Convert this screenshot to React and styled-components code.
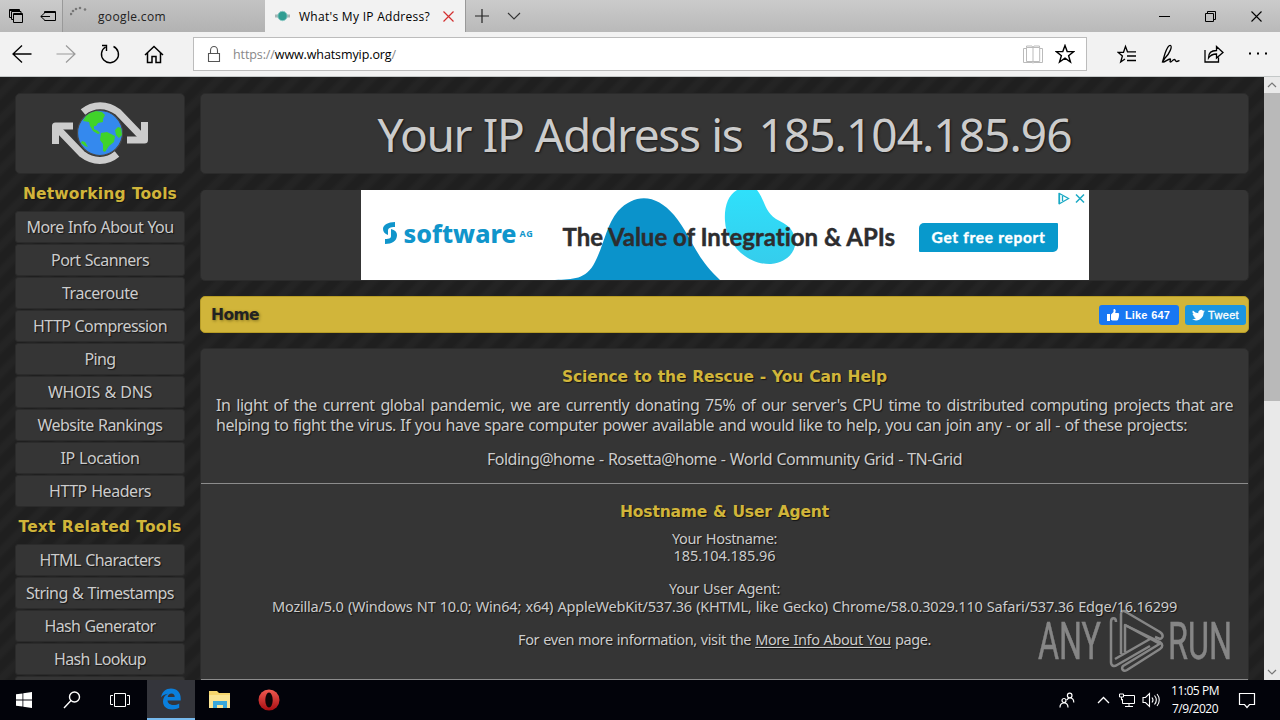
import React, { useLayoutEffect, useRef, useState } from "react";
import styled, { createGlobalStyle, css } from "styled-components";

const GlobalStyle = createGlobalStyle`
    * {
        box-sizing: border-box;
    }

    body {
        margin: 0;
        overflow: hidden;
        background: #000;
        font-family: "Open Sans", "Noto Sans", sans-serif;
    }

    svg {
        flex: none;
    }
`;

const siteFont = `"Noto Sans", "DejaVu Sans", sans-serif`;
const boldFont = `"DejaVu Sans", sans-serif`;

const Screen = styled.div`
    display: flex;
    flex-direction: column;
    width: 1280px;
    height: 720px;
    overflow: hidden;
`;

/* ---------- text that keeps a fixed run length ---------- */

const Run = styled.span`
    display: inline-block;
    white-space: pre;
    flex: none;
`;

function Fit({ width, children, className }) {
    const ref = useRef(null);
    const [spacing, setSpacing] = useState(0);

    useLayoutEffect(() => {
        ref.current.style.letterSpacing = "0px";
        const natural = ref.current.getBoundingClientRect().width;
        setSpacing((width - natural) / ref.current.textContent.length);
    }, [width]);

    return (
        <Run ref={ref} className={className} style={{ letterSpacing: spacing + "px" }}>{children}</Run>
    );
}

/* ---------- browser chrome ---------- */

const TabBar = styled.div`
    display: flex;
    height: 32px;
    flex: none;
    background: linear-gradient(#cbcbcb, #b9b9b9);
`;

const TabTools = styled.div`
    display: flex;
    align-items: center;
    width: 62px;
    padding-left: 8px;
    gap: 16px;
`;

const Tab = styled.div`
    display: flex;
    align-items: center;
    width: ${({ $active }) => ($active ? 200 : 203)}px;
    padding-left: ${({ $active }) => ($active ? 8 : 7)}px;
    font-size: 12px;
    color: ${({ $active }) => ($active ? "#000" : "#222")};
    background: ${({ $active }) => ($active ? "#f2f2f2" : "linear-gradient(#c3c3c3, #b2b2b2)")};
    border-left: 1px solid ${({ $active }) => ($active ? "#f2f2f2" : "#999")};

    & > svg:first-child {
        margin-right: 8px;
    }

    & > svg:last-child {
        margin-left: 13px;
    }
`;

const NewTab = styled.div`
    display: flex;
    align-items: center;
    gap: 18px;
    flex: 1;
    padding-left: 9px;
    border-left: 1px solid #999;
`;

const WindowButtons = styled.div`
    display: flex;
    align-items: center;
    gap: 35px;
    padding-right: 18px;
`;

const Toolbar = styled.div`
    display: flex;
    align-items: center;
    height: 45px;
    flex: none;
    padding-left: 12px;
    background: #f2f2f2;
    border-bottom: 1px solid #c4c8c8;
`;

const NavButtons = styled.div`
    display: flex;
    gap: 24px;
    width: 181px;
`;

const AddressBar = styled.div`
    display: flex;
    align-items: center;
    width: 894px;
    height: 34px;
    padding: 0 11px 0 12px;
    background: #fff;
    border: 1px solid #bcbcbc;
    font-size: 12.5px;
    color: #888;

    b {
        font-weight: 400;
        color: #000;
    }

    & > svg:first-child {
        margin-right: 11px;
    }
`;

const AddressTools = styled.div`
    display: flex;
    gap: 12px;
    margin-left: auto;
`;

const ToolButtons = styled.div`
    display: flex;
    gap: 23.7px;
    padding-left: 30px;
`;

/* ---------- web page ---------- */

const Viewport = styled.div`
    display: flex;
    height: 603px;
    flex: none;
    position: relative;
    overflow: hidden;
`;

const Page = styled.div`
    display: flex;
    gap: 15px;
    width: 1264px;
    padding: 16px 15px 0;
    background: repeating-linear-gradient(135deg, #1f1f1f 0 6px, #242424 10px 14px, #1f1f1f 18px);
    font-family: ${siteFont};
    font-size: 16px;
    word-spacing: 0.7px;
    color: #ccc;
    text-shadow: 1px 1px 1px #151515;
`;

const panel = css`
    flex: none;
    background: #353535;
    border: 1px solid #2b2b2b;
    border-radius: 5px;
`;

const Sidebar = styled.div`
    width: 170px;
    flex: none;
`;

const LogoBox = styled.div`
    ${panel}
    display: flex;
    justify-content: center;
    height: 81px;
    margin-bottom: 1px;
`;

const Logo = styled.svg`
    margin-top: 6px;
`;

const GroupTitle = styled.div`
    height: 36px;
    display: flex;
    align-items: center;
    justify-content: center;
    padding-top: 2px;
    font-family: ${boldFont};
    font-size: 15.5px;
    font-weight: bold;
    color: #d1b53a;
`;

const ToolLink = styled.div`
    ${panel}
    border-radius: 3px;
    display: flex;
    align-items: center;
    justify-content: center;
    height: 32px;
    margin-bottom: 1px;
`;

const Main = styled.div`
    display: flex;
    flex-direction: column;
    flex: none;
    width: 1049px;
`;

const TitlePanel = styled.div`
    ${panel}
    display: flex;
    align-items: center;
    justify-content: center;
    gap: 16px;
    height: 81px;
    margin-bottom: 16px;
    font-size: 46px;
    line-height: 60px;
    text-shadow: 1px 1px 2px #151515;
`;

const AdPanel = styled.div`
    ${panel}
    display: flex;
    justify-content: center;
    height: 91px;
    margin-bottom: 15px;
    border-width: 0 1px 1px;
`;

const Banner = styled.div`
    position: relative;
    display: flex;
    align-items: center;
    width: 728px;
    height: 90px;
    padding-left: 21px;
    background: #fff;
    font-family: Lato, sans-serif;
    font-weight: 700;
    word-spacing: 0;
    text-shadow: none;
`;

const BannerArt = styled.svg`
    position: absolute;
    left: 0;
    top: 0;
`;

const BrandMark = styled.svg`
    margin-top: -5px;
`;

const BrandName = styled(Fit)`
    margin: -4px 3px 0 6px;
    font-family: "Noto Sans", "Open Sans", sans-serif;
    font-size: 25px;
    font-weight: 800;
    color: #1095cb;
`;

const BrandSuffix = styled(Fit)`
    margin: -4px 29px 0 0;
    font-family: "Open Sans", sans-serif;
    font-size: 9px;
    font-weight: 700;
    color: #1095cb;
`;

const Headline = styled(Fit)`
    position: relative;
    margin: 3px 24px 0 0;
    font-size: 24px;
    -webkit-text-stroke: 0.4px #2d2d2f;
    color: #2d2d2f;
`;

const ReportButton = styled.div`
    display: flex;
    align-items: center;
    justify-content: center;
    width: 139px;
    height: 29px;
    margin-top: 5px;
    padding-bottom: 2px;
    border-radius: 5px 1px 5px 1px;
    background: #0899cc;
    color: #fff;
    font-size: 15.5px;
    -webkit-text-stroke: 0.4px #fff;
`;

const HomeBar = styled.div`
    display: flex;
    flex: none;
    align-items: center;
    height: 37px;
    margin-bottom: 15px;
    padding: 1px 2px 0 10px;
    gap: 6px;
    background: #d1b53a;
    border: 1px solid #b79c26;
    border-radius: 5px;
    font-family: ${boldFont};
    font-size: 15.5px;
    font-weight: bold;
    color: #222;
    text-shadow: 1px 1px 3px #80701f;

    & > span {
        margin-right: auto;
    }
`;

const ShareButton = styled.div`
    display: flex;
    align-items: center;
    gap: ${({ $gap }) => $gap}px;
    width: ${({ $width }) => $width}px;
    height: 20px;
    margin-top: -1px;
    padding-left: 7px;
    border-radius: 3px;
    background: ${({ $color }) => $color};
    color: #fff;
    font-family: "Liberation Sans", Arial, sans-serif;
    font-size: 11px;
    font-weight: 700;
    text-shadow: none;
    -webkit-text-stroke: ${({ $soft }) => ($soft ? "0.3px #fff" : "0")};

    & > span {
        font-weight: ${({ $soft }) => ($soft ? 400 : 700)};
    }
`;

const Article = styled.div`
    ${panel}
    height: 360px;
    border-radius: 5px 5px 0 0;
`;

const Section = styled.div`
    padding: 18px 15px 0;
    height: ${({ $height }) => $height}px;
    border-bottom: 1px solid #8c8c8c;
    font-size: ${({ $size }) => $size}px;
    line-height: ${({ $line }) => $line}px;
    text-align: center;
`;

const SectionTitle = styled.div`
    height: 20px;
    margin-bottom: 8px;
    font-family: ${boldFont};
    font-size: 15.5px;
    line-height: 20px;
    font-weight: bold;
    color: #d1b53a;
`;

const Line = styled.div`
    height: ${({ $height }) => $height}px;
    white-space: nowrap;
    text-align: ${({ $align }) => $align || "center"};

    & > span {
        vertical-align: top;
    }

    u {
        text-underline-offset: 2px;
        text-decoration-thickness: 1px;
    }
`;

const Justified = styled(Line)`
    white-space: normal;
    text-align-last: justify;
    letter-spacing: -0.45px;
`;

const ScrollBar = styled.div`
    display: flex;
    flex-direction: column;
    align-items: center;
    width: 16px;
    background: #e9e9e9;
`;

const ScrollThumb = styled.div`
    width: 16px;
    height: 308px;
    margin-bottom: auto;
    background: #b9b9b9;
`;

const Watermark = styled.div`
    position: absolute;
    left: 1036px;
    top: 531px;
    opacity: 0.6;
    word-spacing: 0;
    text-shadow: none;
`;

/* ---------- taskbar ---------- */

const Taskbar = styled.div`
    display: flex;
    align-items: center;
    height: 40px;
    flex: none;
    background: #02030a;
    color: #fff;
`;

const TaskGroup = styled.div`
    display: flex;
    width: 147px;
`;

const TaskItem = styled.div`
    display: flex;
    align-items: center;
    justify-content: center;
    width: ${({ $width }) => $width || 48}px;
    height: 40px;
    padding-left: ${({ $nudge }) => $nudge || 0}px;
    background: ${({ $active }) => ($active ? "#34353b" : "transparent")};
    border-bottom: ${({ $active }) => ($active ? "2px solid #76b9ed" : "none")};
`;

const Tray = styled.div`
    display: flex;
    align-items: center;
    margin-left: auto;
    padding-right: 24px;
`;

const Clock = styled.div`
    display: flex;
    flex-direction: column;
    align-items: center;
    width: 58px;
    margin: 0 14px 0 2px;
    font-size: 12px;
    line-height: 18px;
`;

/* thin outlined glyph used all over the chrome */
function Glyph({ w, h, d, color = "#000", stroke = 1, fill = "none" }) {
    return (
        <svg width={w} height={h} viewBox={`0 0 ${w} ${h}`} fill={fill} stroke={color} strokeWidth={stroke}>
            <path d={d} />
        </svg>
    );
}

const networkingTools = [
    ["More Info About You", 147],
    ["Port Scanners", 98],
    ["Traceroute", 76],
    ["HTTP Compression", 134],
    ["Ping", 31],
    ["WHOIS & DNS", 104],
    ["Website Rankings", 125],
    ["IP Location", 79],
    ["HTTP Headers", 102],
];

const textTools = [
    ["HTML Characters", 121],
    ["String & Timestamps", 148],
    ["Hash Generator", 111],
    ["Hash Lookup", 92],
];

function ToolGroup({ title, width, items }) {
    return (
        <>
            <GroupTitle><Fit width={width}>{title}</Fit></GroupTitle>
            {items.map(([name, w]) => (
                <ToolLink key={name}><Fit width={w}>{name}</Fit></ToolLink>
            ))}
        </>
    );
}

function Chrome() {
    return (
        <>
            <TabBar>
                <TabTools>
                    <Glyph w={16} h={16} d="M3.500 9.500H1.500v-8h10v2M5.500 11.500H3.500v-8h9.500v2M1.500 2.500h10M5.500 5.500h9v9h-9zM5 6.500h10" />
                    <Glyph w={16} h={16} d="M4.500 5.500v-2h11v9h-11v-1M4.500 4.500h11M10 8.500H.8M4 5.500l-3.200 3 3.200 3" />
                </TabTools>
                <Tab>
                    <svg width="20" height="20" viewBox="0 0 20 20" fill="#777">
                        <circle cx="1" cy="8" r="1.300" />
                        <circle cx="3" cy="5" r="1.300" />
                        <circle cx="6" cy="3" r="1.300" />
                        <circle cx="10" cy="2" r="1.300" />
                        <circle cx="15" cy="3.500" r="1.300" />
                    </svg>
                    <Fit width={68}>google.com</Fit>
                </Tab>
                <Tab $active>
                    <svg width="17" height="16" viewBox="0 0 17 16">
                        <path d="M1 6.500h4v3H1zM12 6.500h4v3h-4z" fill="#a7b4b4" />
                        <circle cx="8.500" cy="8" r="4.700" fill="#2f9d92" stroke="#8ec9c5" />
                    </svg>
                    <Fit width={131}>What's My IP Address?</Fit>
                    <Glyph w={11} h={11} d="M.5.5l10 10M10.500.5l-10 10" color="#d32f2f" stroke={1.2} />
                </Tab>
                <NewTab>
                    <Glyph w={14} h={14} d="M7 0v14M0 7h14" color="#222" stroke={1.2} />
                    <Glyph w={14} h={8} d="M1 1l6 6 6-6" color="#333" stroke={1.100} />
                </NewTab>
                <WindowButtons>
                    <Glyph w={11} h={11} d="M0 5.500h11" />
                    <Glyph w={11} h={11} d="M.5 2.500h8v8h-8zM2.500 2.500v-2h8v8h-2" />
                    <Glyph w={11} h={11} d="M.5.5l10 10M10.500.5l-10 10" stroke={1.100} />
                </WindowButtons>
            </TabBar>
            <Toolbar>
                <NavButtons>
                    <Glyph w={20} h={20} d="M1 10h18.500M10 1.500L1 10l9 8.500" stroke={1.3} />
                    <Glyph w={20} h={20} d="M.5 10H19M10 1.500l9 8.500-9 8.500" color="#9a9a9a" stroke={1.2} />
                    <Glyph w={20} h={20} d="M13.500 2.500a8.500 8.500 0 1 1-8 .5M2 1.500h4.500V7" stroke={1.4} />
                    <Glyph w={20} h={20} d="M1 11l9-8.500 9 8.500M3.500 9v9.500h4.500v-6h4v6h4.500V9" stroke={1.5} />
                </NavButtons>
                <AddressBar>
                    <Glyph w={16} h={18} d="M2.500 8.500h11v8h-11zM4.500 8.500v-3a3.500 4 0 0 1 7 0v3" color="#555" stroke={1.1} />
                    <Fit width={163}>https://<b>www.whatsmyip.org</b>/</Fit>
                    <AddressTools>
                        <Glyph w={20} h={20} d="M10 3.500v14M10 3.500H3.500v14h13.200v-14zM3.500 3.500V2h5.500l1 1.500 1-1.500h5.500v1.500M3.500 4.500H.5v14h8.500l1 .5 1-.5h8.500v-14h-3" color="#bbb" />
                        <Glyph w={20} h={20} d="M10 1.500l2.200 6.100h6.600l-5.200 4.100 1.900 6.300L10 14.200 4.500 18l1.900-6.300L1.200 7.600h6.600z" stroke={1.4} />
                    </AddressTools>
                </AddressBar>
                <ToolButtons>
                    <Glyph w={20} h={20} d="M8 15L3.700 18l1.700-6L1 8.300h5.500l2-5.800 2 5.300h8.500M10 12h9M10 16.500h9" stroke={1.3} />
                    <Glyph w={20} h={20} d="M1.500 18L4 9.500C6 4 8 1 9.500 1.500c2 1-1 8-5 12L1.500 18c2 1 5-3 7.500-3 1.500 0-1 3 .5 3s2-2.500 4-2.500c1 0 .8 2 2 2s2-.5 3-1" stroke={1.3} />
                    <Glyph w={20} h={20} d="M1 6v12h13.500v-4.500M4.500 14c0-5 3-7.500 8-7.500v-4l6.500 6-6.500 5.500v-4c-4 0-6 1-8 4z" stroke={1.3} />
                    <Glyph w={20} h={20} d="M1 9.500h2M9 9.500h2M17 9.500h2" stroke={2} />
                </ToolButtons>
            </Toolbar>
        </>
    );
}

function GlobeLogo() {
    return (
        <Logo width="100" height="66" viewBox="0 0 100 66">
            <g fill="none" stroke="#ccc" strokeWidth="7" strokeLinejoin="round">
                <path d="M33 12C43 3.500 57 3.500 68 12L92 37" />
                <path d="M67 54C57 62.500 43 62.500 32 54L8 29" />
                <path d="M94.500 22v18H77M5.500 44V26H23" />
            </g>
            <circle cx="50" cy="33" r="22.500" fill="#3489ee" stroke="#4a4a4a" strokeWidth="1.200" />
            <g fill="#40d32a">
                <path d="M36 16l4-3 6-2 6 1 3 3-2 4 0 3-5 1-2 3-2 0 0 3 4 2 2 2-2 1-5-3-3-5-1-4-6-1z" />
                <path d="M51 33l6-1 8 4-1 6-5 4-4 6-2-1 0-7-3-4z" />
                <path d="M68 27l3 1 1 7-3 3-3-3-1-5zM32 41l3 1 3 5-3-1-4-3z" />
            </g>
        </Logo>
    );
}

function AdBanner() {
    return (
        <Banner>
            <BannerArt width="728" height="90" viewBox="0 0 728 90">
                <defs>
                    <linearGradient id="drop" x1="0" y1="0" x2="0" y2="1">
                        <stop offset="0" stopColor="#2fe0fb" />
                        <stop offset="1" stopColor="#35cdec" />
                    </linearGradient>
                </defs>
                <path d="M194 90c18-1 31 0 40-18 10-20 11-36 23-51 18-19 39-16 56 4 17 20 20 41 46 65z" fill="#0b93cb" />
                <path d="M376 0h20c8 10 7 21 19 29 12 6 17 10 19 20 2 11-6 23-24 25-25 1-45-21-46-43-1-14 3-26 12-31z" fill="url(#drop)" />
                <path d="M698 3v11M698.500 3.500l9 5-9 5.200zM701.500 6v5" fill="none" stroke="#19a9c4" strokeWidth="1.300" />
                <path d="M715 4.500l8 8M723 4.500l-8 8" stroke="#19a9c4" strokeWidth="1.500" />
            </BannerArt>
            <BrandMark width="16" height="24" viewBox="0 0 16 24">
                <path d="M13 1v5c-5 0-7 1-7 4v4c-3-1-5-3-5-6 0-4 5-7 12-7zM3 23v-5c5 0 6-1 6-3v-7c4 1 6 3 6 6 0 6-5 9-12 9z" fill="#1095cb" />
            </BrandMark>
            <BrandName width={113}>software</BrandName>
            <BrandSuffix width={14}>AG</BrandSuffix>
            <Headline width={333}>The Value of Integration &amp; APIs</Headline>
            <ReportButton><Fit width={114}>Get free report</Fit></ReportButton>
        </Banner>
    );
}

function AnyRun() {
    return (
        <Watermark>
            <svg width="200" height="66" viewBox="0 0 200 66" fill="#bdbdbd">
                <g fontFamily="Roboto, sans-serif" fontSize="51" fontWeight="400" stroke="#bdbdbd" strokeWidth="0.500">
                    <text x="2" y="51" textLength="63" lengthAdjust="spacingAndGlyphs">ANY</text>
                    <text x="132" y="51" textLength="64" lengthAdjust="spacingAndGlyphs">RUN</text>
                </g>
                <g fill="none" stroke="#bdbdbd" strokeWidth="2.500" strokeLinejoin="round">
                    <path d="M80 14c0-5-5-5-5 0v40c0 4 3 5 6 3l33-19" />
                    <path d="M79 51l35-20M85 46V6c0-3 3-4 5-2l34 20c4 3 3 6 0 7l-5-2M89 44V17l35 19" />
                    <path d="M89 17l35 17c3 2 3 5 0 7L91 62c-4 2-6-1-4-4l38-23" />
                </g>
            </svg>
        </Watermark>
    );
}

function WebPage() {
    return (
        <Viewport>
            <Page>
                <Sidebar>
                    <LogoBox><GlobeLogo /></LogoBox>
                    <ToolGroup title="Networking Tools" width={154} items={networkingTools} />
                    <ToolGroup title="Text Related Tools" width={163} items={textTools} />
                    <ToolLink />
                </Sidebar>
                <Main>
                    <TitlePanel>
                        <Fit width={365}>Your IP Address is</Fit>
                        <Fit width={313}>185.104.185.96</Fit>
                    </TitlePanel>
                    <AdPanel><AdBanner /></AdPanel>
                    <HomeBar>
                        <Fit width={48}>Home</Fit>
                        <ShareButton $color="#1877f2" $width={80} $gap={5}>
                            <svg width="14" height="14" viewBox="0 0 14 14" fill="#fff">
                                <path d="M1 6h3v7H1zM5 6.500L7.500 4V1.500c0-1 2.200-.8 2.200 1.200L9.200 5H12c1.300 0 1.500 1.300.8 2 .6.700.4 1.500-.2 2 .4.700.1 1.500-.5 1.800.2 1-.2 1.700-1.300 1.700H7c-1 0-1.500-.5-2-.5z" />
                            </svg>
                            <Fit width={45}>Like 647</Fit>
                        </ShareButton>
                        <ShareButton $color="#1b95e0" $width={61} $gap={3} $soft>
                            <svg width="13" height="12" viewBox="0 0 24 20" fill="#fff">
                                <path d="M7.500 20c9 0 14-7.500 14-14v-.6A10 10 0 0 0 24 2.900c-.9.400-1.800.7-2.800.8A5 5 0 0 0 23.300 1c-1 .6-2 1-3.100 1.200a4.900 4.900 0 0 0-8.400 4.500A14 14 0 0 1 1.700 1.600a4.900 4.900 0 0 0 1.500 6.500c-.8 0-1.500-.2-2.200-.6a4.900 4.900 0 0 0 4 4.900c-.7.200-1.500.2-2.300.1a4.900 4.900 0 0 0 4.600 3.400A9.900 9.900 0 0 1 0 17.900 14 14 0 0 0 7.500 20" />
                            </svg>
                            <Fit width={31}>Tweet</Fit>
                        </ShareButton>
                    </HomeBar>
                    <Article>
                        <Section $height={135} $size={16} $line={20}>
                            <SectionTitle><Fit width={325}>Science to the Rescue - You Can Help</Fit></SectionTitle>
                            <Justified $height={20}>In light of the current global pandemic, we are currently donating 75% of our server's CPU time to distributed computing projects that are</Justified>
                            <Line $height={34} $align="left"><Fit width={971}>helping to fight the virus. If you have spare computer power available and would like to help, you can join any - or all - of these projects:</Fit></Line>
                            <Line $height={20}><Fit width={475}>Folding@home - Rosetta@home - World Community Grid - TN-Grid</Fit></Line>
                        </Section>
                        <Section $height={196} $size={14.5} $line={17}>
                            <SectionTitle><Fit width={209}>Hostname &amp; User Agent</Fit></SectionTitle>
                            <Line $height={17}><Fit width={105}>Your Hostname:</Fit></Line>
                            <Line $height={33}><Fit width={102}>185.104.185.96</Fit></Line>
                            <Line $height={18}><Fit width={111}>Your User Agent:</Fit></Line>
                            <Line $height={33}><Fit width={905}>Mozilla/5.0 (Windows NT 10.0; Win64; x64) AppleWebKit/537.36 (KHTML, like Gecko) Chrome/58.0.3029.110 Safari/537.36 Edge/16.16299</Fit></Line>
                            <Line $height={17}><Fit width={413}>For even more information, visit the <u>More Info About You</u> page.</Fit></Line>
                        </Section>
                    </Article>
                </Main>
            </Page>
            <ScrollBar>
                <Glyph w={10} h={16} d="M1 10l4-4 4 4" color="#777" stroke={1.2} />
                <ScrollThumb />
                <Glyph w={10} h={16} d="M1 6l4 4 4-4" color="#777" stroke={1.2} />
            </ScrollBar>
            <AnyRun />
        </Viewport>
    );
}

function WindowsTaskbar() {
    return (
        <Taskbar>
            <TaskGroup>
                <TaskItem>
                    <svg width="16" height="16" viewBox="0 0 16 16" fill="#fff">
                        <path d="M0 2.300L6.500 1.400v6.200H0zM7.300 1.300L16 0v7.600H7.300zM0 8.400h6.500v6.200L0 13.700zM7.300 8.400H16V16l-8.700-1.300z" />
                    </svg>
                </TaskItem>
                <TaskItem><Glyph w={18} h={18} d="M16.500 6a5 5 0 1 1-10 0 5 5 0 0 1 10 0zM8 9.500L1 17" color="#fff" stroke={1.4} /></TaskItem>
                <TaskItem><Glyph w={20} h={16} d="M4.500 1.500h11v13h-11zM3 3.500H.5v9H3M17 3.500h2.500v9H17" color="#fff" /></TaskItem>
            </TaskGroup>
            <TaskItem $active>
                <svg width="20" height="22" viewBox="0 0 20 22">
                    <path d="M0 9.500C1 3.500 5 .5 10 .5c6 0 9.700 4 9.700 9.800v2.200H6.500c.2 3 3 4.500 6 4.500 2.200 0 4-.6 5.700-1.600v4.400c-2 1.100-4.200 1.700-7 1.700C5.500 21.500 2 18.300 2 13.500c0-3.500 1.800-6.300 5-7.700C4 6 1.500 7.500 0 9.500zM6.700 9h7c0-2.300-1.100-3.500-3.200-3.500C8.400 5.500 7.100 6.800 6.700 9z" fill="#0a7fdc" />
                </svg>
            </TaskItem>
            <TaskItem $nudge={2}>
                <svg width="22" height="18" viewBox="0 0 22 18">
                    <path d="M0 0h8l2 2h11v15H0z" fill="#f6d66d" />
                    <path d="M0 4h21v13H0z" fill="#fbe594" />
                    <path d="M4 17v-7h14v7h-4v-3H8v3z" fill="#39a8dc" />
                </svg>
            </TaskItem>
            <TaskItem $nudge={3}>
                <svg width="22" height="22" viewBox="0 0 22 22">
                    <defs>
                        <linearGradient id="opera" x1="0" y1="0" x2="0" y2="1">
                            <stop offset="0" stopColor="#f05a50" />
                            <stop offset="1" stopColor="#a80d12" />
                        </linearGradient>
                    </defs>
                    <circle cx="11" cy="11" r="10.500" fill="url(#opera)" />
                    <ellipse cx="11" cy="11" rx="3.700" ry="7.500" fill="#0b0507" />
                </svg>
            </TaskItem>
            <Tray>
                <TaskItem $width={46}>
                    <Glyph w={16} h={16} d="M7 8.500a2 2 0 1 1-4 0 2 2 0 0 1 4 0zM1 15.500c0-3 1.500-4.500 4-4.500s4 1.500 4 4.500M13 3.500a2.300 2.300 0 1 1-4.600 0 2.300 2.300 0 0 1 4.600 0zM8 8c.5-1.500 1.500-2 3-2 2.500 0 3.800 1.500 3.800 4.500" color="#fff" stroke={1.2} />
                </TaskItem>
                <TaskItem $width={26}><Glyph w={13} h={8} d="M1 7l5.500-5.500L12 7" color="#fff" stroke={1.3} /></TaskItem>
                <TaskItem $width={22}><Glyph w={16} h={16} d="M4 3.500h11.500v8H3.500V7M10 11.500v3M6 14.500h8M.5 2h4v3h-4zM2.500 5v3h1.500" color="#fff" /></TaskItem>
                <TaskItem $width={26}><Glyph w={18} h={16} d="M1 5.500h2.500l4-4v13l-4-4H1zM10 5.500c1.200 1.500 1.200 3.500 0 5M12.500 3.500c2.200 2.700 2.200 6.300 0 9M15 2c3 3.500 3 8.500 0 12" color="#fff" stroke={1.1} /></TaskItem>
                <Clock>
                    <Fit width={48}>11:05 PM</Fit>
                    <Fit width={46}>7/9/2020</Fit>
                </Clock>
                <Glyph w={18} h={18} d="M1.500 2.500h15v11h-5l-2.500 3-2.500-3h-5z" color="#fff" stroke={1.2} />
            </Tray>
        </Taskbar>
    );
}

function App() {
    return (
        <Screen>
            <GlobalStyle />
            <Chrome />
            <WebPage />
            <WindowsTaskbar />
        </Screen>
    );
}

export default App;
